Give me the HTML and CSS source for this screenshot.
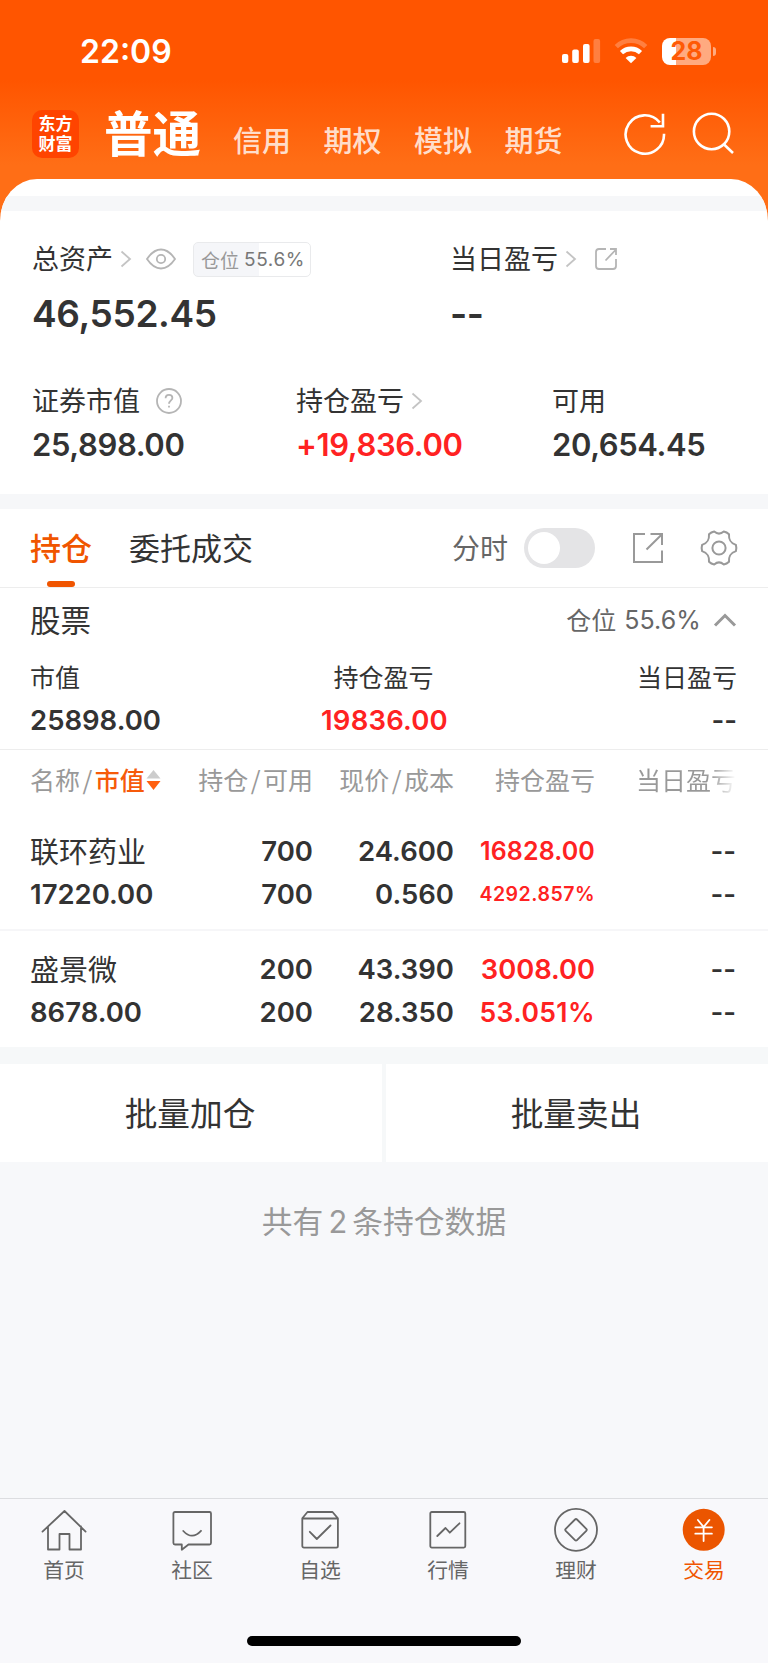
FILE: index.html
```html
<!DOCTYPE html>
<html lang="zh-CN">
<head>
<meta charset="utf-8">
<title>交易</title>
<link rel="stylesheet" href="styles.css">
</head>
<body>
<div class="screen">
  <header class="header">
    <div class="status">
      <span class="time">22:09</span>
      <div class="status-icons">
        <svg class="signal" width="39" height="25" viewBox="0 0 39 25" fill="#fff"><rect x="0" y="15" width="6.3" height="9" rx="2"/><rect x="10.2" y="10.4" width="6.6" height="13.6" rx="2"/><rect x="21" y="5" width="6.6" height="19" rx="2"/><rect x="31.5" y="0" width="6.6" height="24" rx="2" opacity=".25"/></svg>
        <svg class="wifi" width="34" height="26" viewBox="0 0 34 26" fill="none" stroke="#fff"><path d="M2.3 8.6A21 21 0 0 1 31.7 8.6" stroke-width="4.6" opacity=".25"/><path d="M7.5 14.6A14 14 0 0 1 26.5 14.6" stroke-width="4.6"/><path d="M17 25.200L11.600 19.900A7.800 7.800 0 0 1 22.400 19.900Z" fill="#fff" stroke="none"/></svg>
        <div class="battery"><span>28</span></div>
        <i class="battery-tip"></i>
      </div>
    </div>
    <div class="topnav">
      <div class="logo"><span>东方</span><span>财富</span></div>
      <nav class="accounts"><b>普通</b><span>信用</span><span>期权</span><span>模拟</span><span>期货</span></nav>
      <svg class="refresh" width="44" height="44" viewBox="0 0 44 44" fill="none" stroke="#fff" stroke-width="2.6"><path d="M41 21.700A19.200 19.200 0 1 1 36.800 10.500"/><path d="M40 1.800V14.300H27.600"/></svg>
      <svg class="search" width="44" height="44" viewBox="0 0 44 44" fill="none" stroke="#fff" stroke-width="2.6"><circle cx="20.600" cy="19.500" r="17.700"/><path d="M32.800 32.300L42 41"/></svg>
    </div>
  </header>

  <main class="sheet">
    <div class="band"></div>
    <section class="assets">
      <div class="asset-row total-labels">
        <div class="label"><span class="zh">总资产</span><svg class="chev" width="12" height="18" viewBox="0 0 12 18"><path d="M1.500 1.500L10 9L1.500 16.500"/></svg><svg class="eye" width="30" height="22" viewBox="0 0 30 22"><path d="M1 11C5.500 4.300 10 1.500 15 1.500S24.500 4.300 29 11C24.500 17.700 20 20.500 15 20.500S5.500 17.700 1 11Z"/><circle cx="15" cy="11" r="4.200"/></svg><span class="badge"><span class="zh">仓位</span><em>55.6%</em></span></div>
        <div class="label"><span class="zh">当日盈亏</span><svg class="chev" width="12" height="18" viewBox="0 0 12 18"><path d="M1.500 1.500L10 9L1.500 16.500"/></svg><svg class="share-sm" width="24" height="24" viewBox="0 0 24 24"><path d="M12 2H5Q2 2 2 5V19Q2 22 5 22H19Q22 22 22 19V12M11.500 13.500L22 2.500M16 2H22V8"/></svg></div>
      </div>
      <div class="asset-row total-values"><span>46,552.45</span><span class="dash-lg">--</span></div>
      <div class="asset-row detail-labels">
        <div class="label"><span class="zh">证券市值</span><svg class="help" width="28" height="28" viewBox="0 0 28 28"><circle cx="14" cy="14" r="12"/><path d="M10.600 11.300C10.600 9 12 7.800 14 7.800S17.400 9 17.400 11C17.400 13.300 14 13.500 14 16.800M14 18.700V20.500"/></svg></div>
        <div class="label"><span class="zh">持仓盈亏</span><svg class="chev" width="12" height="18" viewBox="0 0 12 18"><path d="M1.500 1.500L10 9L1.500 16.500"/></svg></div>
        <div class="label"><span class="zh">可用</span></div>
      </div>
      <div class="asset-row detail-values"><span>25,898.00</span><span class="up">+19,836.00</span><span>20,654.45</span></div>
    </section>
    <div class="band"></div>

    <section class="tabs">
      <div class="tab active"><span class="zh">持仓</span></div>
      <div class="tab"><span class="zh">委托成交</span></div>
      <div class="tools">
        <span class="zh minute">分时</span>
        <span class="toggle"><i></i></span>
        <svg class="share" width="32" height="32" viewBox="0 0 32 32"><path d="M13 2H2V30H30V18.500M14.500 17.500L30 2.200M18.500 2H30V13"/></svg>
        <svg class="gear" width="38" height="38" viewBox="0 0 38 38"><path d="M14.200 2.600Q19 6.600 23.800 2.600Q26.800 3.200 29 5.300C28.600 11 30.300 13.800 35.900 15.900Q36.800 19 35.900 22.100C30.300 24.200 28.600 27 29 32.700Q26.800 34.800 23.800 35.400Q19 31.400 14.200 35.400Q11.200 34.800 9 32.700C9.400 27 7.700 24.200 2.100 22.100Q1.200 19 2.100 15.900C7.700 13.800 9.400 11 9 5.300Q11.200 3.200 14.200 2.600Z"/><circle cx="19" cy="19" r="6.600"/></svg>
      </div>
    </section>

    <section class="stock">
      <div class="stock-title"><span class="zh">股票</span><div class="position"><span class="zh">仓位</span><em>55.6%</em><svg width="24" height="16" viewBox="0 0 24 16"><path d="M2 13.500L12 3.500L22 13.500"/></svg></div></div>
      <div class="summary summary-labels"><span class="zh">市值</span><span class="zh">持仓盈亏</span><span class="zh">当日盈亏</span></div>
      <div class="summary summary-values"><span>25898.00</span><span class="up">19836.00</span><span>--</span></div>
    </section>

    <section class="table">
      <div class="row head">
        <span class="first">名称<s>/</s><b>市值</b><svg width="15" height="22" viewBox="0 0 15 22"><path d="M7.500 1L14.500 9.500H.5Z" fill="#ccc"/><path d="M.5 12H14.500L7.500 21Z" fill="#ff6010"/></svg></span>
        <span>持仓<s>/</s>可用</span><span>现价<s>/</s>成本</span><span>持仓盈亏</span><span class="fade">当日盈亏</span>
      </div>
      <div class="row item">
        <span class="name zh">联环药业</span><span>700</span><span>24.600</span><span class="up s25">16828.00</span><span>--</span>
        <span class="name">17220.00</span><span>700</span><span>0.560</span><span class="up s19">4292.857%</span><span>--</span>
      </div>
      <div class="row item">
        <span class="name zh">盛景微</span><span>200</span><span>43.390</span><span class="up s27">3008.00</span><span>--</span>
        <span class="name">8678.00</span><span>200</span><span>28.350</span><span class="up s26">53.051%</span><span>--</span>
      </div>
    </section>
  </main>

  <div class="actions"><div class="action"><span class="zh">批量加仓</span></div><div class="action"><span class="zh">批量卖出</span></div></div>
  <p class="note"><span class="zh">共有<i>2</i>条持仓数据</span></p>

  <footer class="footer">
    <nav class="tabbar">
      <div><svg width="48" height="48" viewBox="0 0 48 48"><path d="M2.500 25.600L24.500 5L45.600 25.600M8 20.500V43.500H19.500V28H29.500V43.500H41V20.500"/></svg><span>首页</span></div>
      <div><svg width="48" height="48" viewBox="0 0 48 48"><path d="M7 6H41.500Q43 6 43 7.500V37Q43 38.500 41.500 38.500H20.500L13.800 43.800V38.500H7Q5.400 38.500 5.400 37V7.500Q5.400 6 7 6ZM15.300 25Q24 34.500 33 24.800"/></svg><span>社区</span></div>
      <div><svg width="48" height="48" viewBox="0 0 48 48"><path d="M6.300 12.300L11.500 6H36.500L41.900 12.300V40Q41.900 41.600 40.300 41.600H8Q6.300 41.600 6.300 40ZM6.300 12.500H41.900M13.800 25.800L20.800 33L34.500 19.500"/></svg><span>自选</span></div>
      <div><svg width="48" height="48" viewBox="0 0 48 48"><rect x="6.300" y="6" width="35" height="35.600" rx="1.500"/><path d="M13.300 30L21.500 22L25.800 26.700L35.500 17.300"/></svg><span>行情</span></div>
      <div><svg width="48" height="48" viewBox="0 0 48 48"><circle cx="24" cy="23.800" r="21"/><path d="M23 13.500Q24 12.500 25 13.500L34.300 22.800Q35.300 23.800 34.300 24.800L25 34.100Q24 35.100 23 34.100L13.700 24.800Q12.700 23.800 13.700 22.800Z"/></svg><span>理财</span></div>
      <div class="current"><svg width="48" height="48" viewBox="0 0 48 48"><circle cx="23.700" cy="23.800" r="21" fill="#eb5500" stroke="none"/><path stroke="#fff" d="M17.900 14L23.600 21L29.400 14M23.600 21V35M15.300 21.300H31.900M15.300 27.700H31.900"/></svg><span>交易</span></div>
    </nav>
    <div class="home-indicator"></div>
  </footer>
</div>
</body>
</html>
```

FILE: styles.css
```css
* { box-sizing: border-box; }

body {
  margin: 0;
  font-family: Inter, "Noto Sans CJK SC", sans-serif;
  color: #333;
}

em, i, s { font-style: normal; text-decoration: none; }

svg { display: block; flex: none; }

.screen {
  display: flex;
  flex-direction: column;
  width: 768px;
  height: 1663px;
  overflow: hidden;
  background: linear-gradient(#ff5500 80px, #ff6e16 165px, #ff6e16 240px, #f7f8fa 240px);
}

/* the CJK face sits low in its line box; the padding recentres it */
.zh {
  font-family: "Noto Sans CJK SC", sans-serif;
  padding-bottom: .05em;
  white-space: nowrap;
}

.up { color: #ff2222; }

/* header */
.header { height: 179px; color: #fff; flex: none; }

.status {
  display: flex;
  align-items: center;
  justify-content: space-between;
  height: 102px;
  padding: 0 52px 0 80px;
}
.time { font-size: 32px; font-weight: 600; letter-spacing: 0; }
.status-icons { display: flex; align-items: center; }
.wifi { margin-left: 13px; }
.battery {
  display: flex;
  align-items: center;
  justify-content: center;
  width: 49px;
  height: 27px;
  margin-left: 14px;
  border-radius: 8px;
  background: linear-gradient(90deg, #fff 14px, rgba(255, 255, 255, .5) 14px);
  color: #ff5a05;
  font-size: 25px;
  font-weight: 700;
}
.battery-tip {
  width: 3px;
  height: 9px;
  margin-left: 2px;
  border-radius: 0 4px 4px 0;
  background: rgba(255, 255, 255, .5);
}

.topnav { display: flex; align-items: flex-start; height: 77px; padding-left: 32px; }
.logo {
  display: flex;
  flex-direction: column;
  align-items: center;
  width: 47px;
  height: 48px;
  margin-top: 8px;
  padding-top: 3px;
  border-radius: 10px;
  background: #ff4400;
  font: 700 17px/20px "Noto Sans CJK SC", sans-serif;
}
.accounts {
  display: flex;
  align-items: baseline;
  width: 518px;
  padding: 1px 0 0 25px;
  font: 500 29px/56px "Noto Sans CJK SC", sans-serif;
}
.accounts b { font-size: 48.500px; font-weight: 700; margin-right: 2px; }
.accounts span { margin-left: 32.500px; color: rgba(255, 255, 255, .8); }
.accounts b + span { margin-left: 30px; }
.refresh { margin: 10px 0 0 26px; }
.search { margin: 10px 0 0 24px; }

/* content sheet */
.sheet {
  flex: none;
  padding-top: 17px;
  border-radius: 37px 37px 0 0 / 42px 42px 0 0;
  overflow: hidden;
  background: #fff;
}
.band { height: 15px; background: #f6f7f9; }

.assets { height: 283px; padding: 27px 0 0 32px; }
.asset-row { display: grid; align-items: center; }
.label { display: flex; align-items: center; font-size: 27px; line-height: 38px; }
.label svg { fill: none; stroke: #b5b5b5; stroke-width: 1.8; }
.total-labels { grid-template-columns: 418px 1fr; height: 42px; }
.total-values {
  grid-template-columns: 418px 1fr;
  height: 48px;
  margin-top: 9px;
  font-size: 37px;
  font-weight: 600;
  letter-spacing: -.35px;
}
.detail-labels { grid-template-columns: 264px 256px 1fr; height: 40px; margin-top: 44px; }
.detail-values {
  grid-template-columns: 264px 256px 1fr;
  height: 40px;
  margin-top: 4px;
  padding-bottom: 1px;
  font-size: 31px;
  font-weight: 600;
  letter-spacing: -.38px;
}
.label .chev { margin-left: 7px; stroke: #c4c4c4; }
.eye { margin-left: 14px; }
.share-sm { margin-left: 17px; }
.help { margin-left: 15px; }
.badge {
  display: flex;
  align-items: center;
  width: 118px;
  height: 35px;
  margin-left: 17px;
  padding: 2px 0 0 7px;
  border: 1px solid #e9eaec;
  border-radius: 5px;
  background: linear-gradient(90deg, #f5f6f9 65px, #fff 65px);
  color: #999;
  font-size: 19px;
  line-height: 30px;
}
.badge em { margin-left: 5px; color: #777; font-size: 19px; letter-spacing: .6px; }

/* holdings tabs */
.tabs {
  display: flex;
  align-items: stretch;
  height: 79px;
  padding: 0 30px 0 30px;
  border-bottom: 1px solid #ededed;
  font-size: 31px;
  line-height: 44px;
}
.tab { display: flex; align-items: center; margin-right: 37px; }
.tab.active { position: relative; color: #f05500; font-weight: 500; }
.tab.active::after {
  content: "";
  position: absolute;
  left: 17px;
  bottom: 0;
  width: 28px;
  height: 6px;
  border-radius: 3px;
  background: #f05500;
}
.tools { display: flex; align-items: center; margin-left: auto; }
.minute { color: #666; font-size: 28px; }
.toggle { width: 71px; height: 40px; margin-left: 16px; padding: 4px; border-radius: 20px; background: #e4e4e6; }
.toggle i { display: block; width: 32px; height: 32px; border-radius: 50%; background: #fff; }
.tools svg { fill: none; stroke: #999; stroke-width: 2; }
.share { margin-left: 37px; }
.gear { margin-left: 36px; }

/* stock summary */
.stock { height: 162px; padding: 0 31px 0 30px; border-bottom: 1px solid #ededed; }
.stock-title {
  display: flex;
  align-items: center;
  justify-content: space-between;
  height: 64px;
  padding-bottom: 1px;
  font-size: 30.500px;
  line-height: 44px;
}
.position { display: flex; align-items: center; color: #666; font-size: 25px; }
.position em { margin-left: 8px; letter-spacing: .1px; }
.position svg { margin-left: 12px; fill: none; stroke: #999; stroke-width: 3; }
.summary { display: grid; grid-template-columns: 1fr 1fr 1fr; align-items: center; }
.summary span:nth-child(2) { text-align: center; }
.summary span:nth-child(3) { text-align: right; }
.summary-labels { height: 41px; margin-top: 4px; font-size: 25px; line-height: 36px; }
.summary-values { height: 46px; font-size: 27.500px; font-weight: 600; }
.summary-values .up { padding-left: 2px; letter-spacing: .2px; }

/* holdings table */
.row {
  display: grid;
  grid-template-columns: 130px 153px 141px 141px 141px;
  align-items: center;
  padding-left: 30px;
  text-align: right;
}
.head {
  height: 63px;
  padding-bottom: 5px;
  color: #999;
  font: 25px/36px "Noto Sans CJK SC", sans-serif;
  white-space: nowrap;
}
.head s { padding: 0 2.500px; }
.head .first { display: flex; align-items: center; }
.head b { color: #f65a0a; font-weight: 500; }
.head svg { margin: 2px 0 0 1px; }
.fade {
  background: linear-gradient(90deg, #999 82%, #fff);
  background-clip: text;
  color: transparent;
}
.item {
  grid-auto-rows: 43px;
  padding-top: 16.500px;
  padding-bottom: 13.500px;
  font-size: 27.500px;
  font-weight: 600;
}
.head + .item { border-bottom: 2px solid #f6f6f8; }
.item .name { text-align: left; }
.item .zh { font-size: 29px; font-weight: 400; line-height: 40px; }
.item .s25 { font-size: 25px; letter-spacing: .15px; }
.item .s26 { font-size: 26.500px; letter-spacing: .4px; }
.item .s27 { font-size: 27.300px; }
.item .s19 { font-size: 19.500px; letter-spacing: .5px; }

/* batch actions */
.actions {
  display: grid;
  grid-template-columns: 382px 382px;
  gap: 4px;
  flex: none;
  height: 115px;
  padding-top: 17px;
  background: #f6f8f9;
}
.action {
  display: flex;
  align-items: center;
  justify-content: center;
  padding-right: 2px;
  background: #fff;
  font-size: 32.700px;
  line-height: 44px;
}
.note {
  display: flex;
  align-items: center;
  justify-content: center;
  flex: none;
  height: 119px;
  margin: 0;
  color: #999;
  font-size: 30.800px;
  line-height: 44px;
}
.note i { padding: 0 5px; font-family: Inter, sans-serif; }

/* bottom navigation */
.footer { flex: none; height: 165px; margin-top: auto; border-top: 1px solid #dcdde0; background: #f8f8fb; }
.tabbar {
  display: grid;
  grid-template-columns: repeat(6, 128px);
  height: 137px;
  padding-top: 7px;
  color: #666;
  font: 20.800px/31px "Noto Sans CJK SC", sans-serif;
}
.tabbar div { display: flex; flex-direction: column; align-items: center; }
.tabbar svg { fill: none; stroke: #666; stroke-width: 1.8; stroke-linejoin: round; stroke-linecap: round; }
.tabbar .current { color: #f05500; }
.home-indicator { width: 274px; height: 10px; margin: 0 auto; border-radius: 5px; background: #000; }
```
